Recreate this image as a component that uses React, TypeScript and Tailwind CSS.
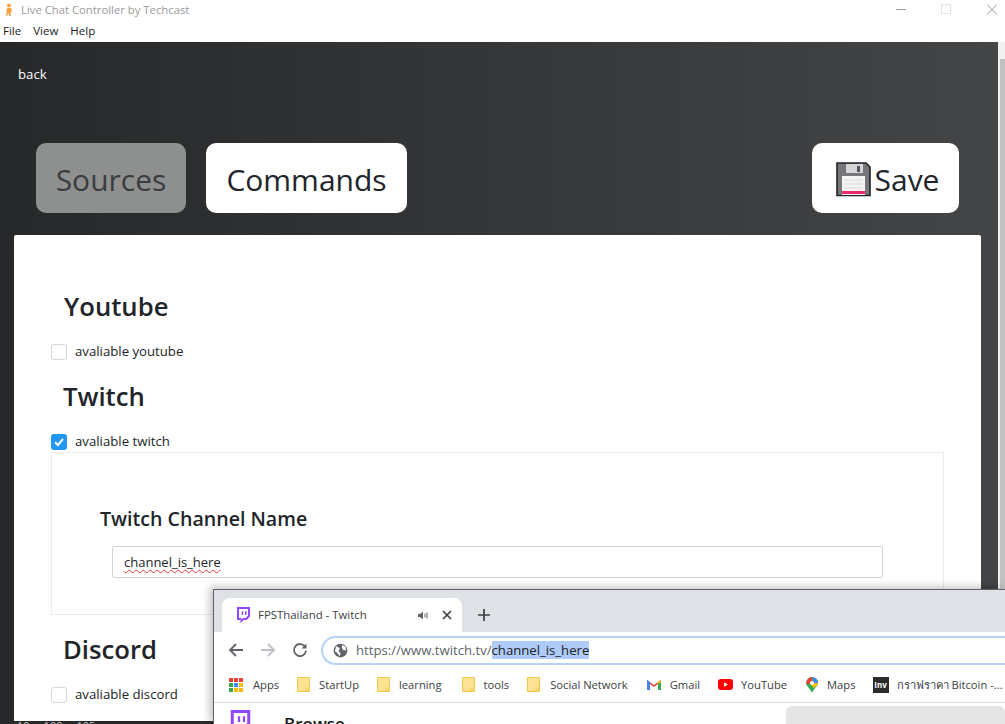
import React from "react";

const font = { fontFamily: '"Open Sans", "Noto Sans", sans-serif' };

function Floppy() {
  return (
    <svg width="35" height="35" viewBox="0 0 35 35" className="shrink-0">
      <path d="M1 1H30L34 5V33.5H1Z" fill="#77777b" stroke="#222226" strokeWidth="1.6" />
      <rect x="10" y="2" width="17" height="9" fill="#d5d5d7" />
      <rect x="21" y="4" width="3" height="6" fill="#55555a" />
      <rect x="6" y="14" width="23" height="19" fill="#f4f4f4" />
      <path d="M8 18H27M8 22H27M8 26H27" stroke="#d8d8d8" strokeWidth="1" />
      <rect x="6" y="29" width="23" height="3" fill="#e8286f" />
    </svg>
  );
}

function Check({ checked, label }: { checked?: boolean; label: string }) {
  return (
    <label className="flex items-center h-[20px] text-[13.2px] text-[#212529]">
      {checked ? (
        <span className="w-4 h-4 rounded-[3px] bg-[#2196f3] flex items-center justify-center">
          <svg width="12" height="12" viewBox="0 0 12 12">
            <path d="M2 6.2L5 9L10 3" fill="none" stroke="#fff" strokeWidth="2" />
          </svg>
        </span>
      ) : (
        <span className="w-4 h-4 rounded-[3px] border border-[#d5d7da] bg-white" />
      )}
      <span className="ml-2">{label}</span>
    </label>
  );
}

function Folder() {
  return (
    <svg width="13" height="15" viewBox="0 0 13 15" className="shrink-0">
      <path d="M.5.5H12.5V14.5H.5Z" fill="#fde293" stroke="#f0c84f" />
      <rect x="9" y="11" width="3" height="3" fill="#fde293" stroke="#f0c84f" strokeWidth=".8" />
    </svg>
  );
}

function Bookmark({ icon, label, gap = "gap-[9px]" }: { icon: React.ReactNode; label: string; gap?: string }) {
  return (
    <span className={`flex items-center ${gap} text-[11.2px] text-[#3c4043] whitespace-nowrap`}>
      {icon}
      {label}
    </span>
  );
}

function Twitch({ size = 15 }: { size?: number }) {
  return (
    <svg width={size} height={size + 1} viewBox="0 0 15 16" className="shrink-0">
      <path d="M2 0H15V9.5L11.5 13H8.5L5.5 16V13H2Z" fill="#9146ff" />
      <path d="M4 2H13V8.7L10.7 11H8L6.3 12.7V11H4Z" fill="#fff" />
      <path d="M7.5 4.2V8M10.8 4.2V8" stroke="#9146ff" strokeWidth="1.5" />
    </svg>
  );
}

function Browser() {
  return (
    <div className="absolute left-[213px] top-[589px] w-[792px] h-[135px] bg-white border-l border-t border-[#5f6368] shadow-[-3px_-2px_8px_rgba(0,0,0,0.25)] overflow-hidden" style={font}>
      <div className="h-[42px] bg-[#dee1e6] flex items-end pl-2 pt-2">
        <div className="w-[240px] h-[34px] bg-white rounded-t-lg flex items-center pl-[13px] pr-[10px]">
          <Twitch />
          <span className="ml-[8px] text-[11.4px] text-[#3c4043]">FPSThailand - Twitch</span>
          <svg width="11" height="11" viewBox="0 0 11 11" className="ml-auto">
            <path d="M0 4H2L5 1.5V9.5L2 7H0Z" fill="#5f6368" />
            <path d="M7 3.5V7.5M9 2.5V8.5" stroke="#5f6368" strokeWidth="1" />
          </svg>
          <svg width="10" height="10" viewBox="0 0 10 10" className="ml-[13px]">
            <path d="M1 1L9 9M9 1L1 9" stroke="#3c4043" strokeWidth="1.7" />
          </svg>
        </div>
        <svg width="12" height="12" viewBox="0 0 12 12" className="ml-[16px] mb-[11px]">
          <path d="M6 0V12M0 6H12" stroke="#3c4043" strokeWidth="1.7" />
        </svg>
      </div>
      <div className="h-[36px] flex items-center pl-[14px] bg-white">
        <svg width="16" height="16" viewBox="0 0 16 16">
          <path d="M15 8H2M8 2L2 8L8 14" fill="none" stroke="#5f6368" strokeWidth="1.8" />
        </svg>
        <svg width="16" height="16" viewBox="0 0 16 16" className="ml-[16px]">
          <path d="M1 8H14M8 2L14 8L8 14" fill="none" stroke="#bdc1c6" strokeWidth="1.8" />
        </svg>
        <svg width="16" height="16" viewBox="0 0 16 16" className="ml-[16px]">
          <path d="M13.2 5A6 6 0 1 0 14 8.5" fill="none" stroke="#5f6368" strokeWidth="1.8" />
          <path d="M14.5 1.5V6.5H9.5Z" fill="#5f6368" />
        </svg>
        <div className="ml-[13px] flex-1 h-[29px] rounded-l-full border-2 border-r-0 border-[#b6d3f5] flex items-center pl-[10px]">
          <svg width="15" height="15" viewBox="0 0 24 24">
            <circle cx="12" cy="12" r="11" fill="#5f6368" />
            <path d="M5 5L11 8L9 13L12 16L11 21L6 15L3 13ZM15 3L20 6L21 12L16 11L14 7Z" fill="#fff" />
          </svg>
          <span className="ml-[8px] text-[13.15px] text-[#5f6368] leading-[22px]">
            https://www.twitch.tv/
            <span className="bg-[#aecbfa] text-[#202124]">channel_is_here</span>
          </span>
        </div>
      </div>
      <div className="h-[35px] border-b border-[#dadce0] flex items-center pl-[15px]">
        <Bookmark
          gap="gap-[10px]"
          label="Apps"
          icon={
            <span className="grid grid-cols-3 gap-[1px] w-[14px]">
              {["#ea4335", "#ea4335", "#ea4335", "#34a853", "#4285f4", "#fbbc04", "#34a853", "#fbbc04", "#fbbc04"].map((c, i) => (
                <span key={i} className="w-[4px] h-[4px]" style={{ background: c }} />
              ))}
            </span>
          }
        />
        <span className="ml-[18px]"><Bookmark icon={<Folder />} label="StartUp" /></span>
        <span className="ml-[18px]"><Bookmark icon={<Folder />} label="learning" /></span>
        <span className="ml-[20px]"><Bookmark icon={<Folder />} label="tools" /></span>
        <span className="ml-[18px]"><Bookmark icon={<Folder />} gap="gap-[10px]" label="Social Network" /></span>
        <span className="ml-[19px]">
          <Bookmark
            label="Gmail"
            icon={
              <svg width="14" height="11" viewBox="0 0 14 11">
                <path d="M0 11V1L7 6L14 1V11H11V5L7 8L3 5V11Z" fill="#ea4335" />
                <path d="M0 11V1L3 3V11Z" fill="#4285f4" />
                <path d="M14 11V1L11 3V11Z" fill="#34a853" />
                <path d="M11 3L14 1V3L11 5Z" fill="#fbbc04" />
              </svg>
            }
          />
        </span>
        <span className="ml-[18px]">
          <Bookmark
            gap="gap-[8px]"
            label="YouTube"
            icon={
              <svg width="15" height="11" viewBox="0 0 15 11">
                <rect width="15" height="11" rx="3" fill="#ff0000" />
                <path d="M6 3.2L10 5.5L6 7.8Z" fill="#fff" />
              </svg>
            }
          />
        </span>
        <span className="ml-[19px]">
          <Bookmark
            gap="gap-[9px]"
            label="Maps"
            icon={
              <svg width="12" height="16" viewBox="0 0 12 16">
                <path d="M6 0A6 6 0 0 1 12 6C12 9 8 11 6 16C4 11 0 9 0 6A6 6 0 0 1 6 0Z" fill="#34a853" />
                <path d="M2 2A6 6 0 0 1 6 0V4L3 7L0.4 7A6 6 0 0 1 2 2Z" fill="#ea4335" />
                <path d="M6 0A6 6 0 0 1 12 6H8Z" fill="#4285f4" />
                <path d="M12 6C12 8 10 9 8 11L5 8L8 6Z" fill="#fbbc04" />
                <circle cx="6" cy="6" r="2" fill="#fff" />
              </svg>
            }
          />
        </span>
        <span className="ml-[17px]">
          <Bookmark
            gap="gap-[8px]"
            label="กราฟราคา Bitcoin -..."
            icon={
              <span className="w-[16px] h-[16px] bg-[#2b2b2b] text-white text-[8px] font-bold flex items-center justify-center leading-none">Inv</span>
            }
          />
        </span>
      </div>
      <div className="relative h-[22px] pl-[13px] pt-[3px] flex">
        <svg width="24" height="24" viewBox="0 0 15 16" className="shrink-0 mt-[4px]">
          <path d="M2 0H15V9.5L11.5 13H8.5L5.5 16V13H2Z" fill="#9146ff" />
          <path d="M4 2H13V8.7L10.7 11H8L6.3 12.7V11H4Z" fill="#fff" />
          <path d="M7.5 4.2V8M10.8 4.2V8" stroke="#9146ff" strokeWidth="1.5" />
        </svg>
        <span className="ml-[33px] mt-[7px] text-[17px] font-semibold text-[#18181b] leading-[22px]">Browse</span>
        <div className="ml-[441px] w-[240px] h-[30px] bg-[#e5e5e5] rounded-md pl-[12px] pt-[8px] text-[13px] text-[#555] leading-[30px]">Search</div>
      </div>
    </div>
  );
}

export default function App() {
  return (
    <div className="relative w-[1005px] h-[724px] overflow-hidden bg-white" style={font}>
      <div className="h-[42px] bg-white">
        <div className="h-[20px] flex items-center pl-[4px] relative">
          <svg width="10" height="14" viewBox="0 0 10 14">
            <circle cx="5" cy="2.5" r="2" fill="#f6a13c" />
            <path d="M3.5 5H7L8 9L6.5 9L7 13H5.5L4.5 10L3 13H2L3 8L2 8Z" fill="#f6a13c" />
          </svg>
          <span className="ml-[7px] text-[11.3px] text-[#9a9a9a]">Live Chat Controller by Techcast</span>
          <div className="absolute right-[4px] top-0 h-[20px]">
            <svg width="105" height="20" viewBox="0 0 105 20">
              <path d="M0 9.5H10" stroke="#a0a0a0" />
              <rect x="45.5" y="4.5" width="9" height="9" fill="none" stroke="#e4e4e4" />
              <path d="M91 4.5L101 14.5M101 4.5L91 14.5" stroke="#a0a0a0" />
            </svg>
          </div>
        </div>
        <div className="h-[22px] flex items-center pl-[3px] gap-[12px] text-[11.5px] text-[#1a1a1a]">
          <span>File</span>
          <span>View</span>
          <span>Help</span>
        </div>
      </div>

      <div className="relative h-[682px] flex">
        <div className="flex-1 min-w-0 bg-gradient-to-r from-[#26282a] to-[#434547] pl-[14px] pr-[17px] overflow-hidden">
          <div className="pl-[4px] pt-[22px] text-[13.2px] leading-[20px] text-white">back</div>
          <div className="flex items-start pl-[22px] pr-[22px] mt-[59px]">
            <div className="w-[150px] h-[70px] pt-[3px] rounded-[10px] bg-[#8e9090] flex items-center justify-center text-[30px] text-[#3a3c3e]">Sources</div>
            <div className="ml-[20px] w-[201px] h-[70px] pt-[3px] rounded-[10px] bg-white flex items-center justify-center text-[30px] text-[#212529]">Commands</div>
            <div className="ml-auto w-[147px] h-[70px] pt-[3px] pl-[4px] rounded-[10px] bg-white flex items-center justify-center text-[30px] text-[#212529]">
              <Floppy />
              <span className="ml-[4px]">Save</span>
            </div>
          </div>
          <div className="mt-[22px] h-[486px] bg-white rounded-t-[2px] pl-[37px] pr-[37px] pt-[50px]">
            <h2 className="pl-[13px] text-[25.7px] leading-[44px] font-semibold text-[#212529]">Youtube</h2>
            <div className="mt-[13px]"><Check label="avaliable youtube" /></div>
            <h2 className="pl-[12px] mt-[13px] text-[25.7px] leading-[44px] font-semibold text-[#212529]">Twitch</h2>
            <div className="mt-[13px]"><Check checked label="avaliable twitch" /></div>
            <div className="h-[163px] border border-[#ececec] pl-[48px] pt-[51px]">
              <div className="text-[19.6px] leading-[30px] font-semibold text-[#212529]">Twitch Channel Name</div>
              <div className="ml-[12px] mt-[12px] w-[771px] h-[32px] border border-[#ced4da] rounded-[2px] pl-[11px] text-[13px] leading-[31px] text-[#212529]">
                <span className="underline decoration-wavy decoration-[#e53935] decoration-1 underline-offset-2">channel_is_here</span>
              </div>
            </div>
            <h2 className="pl-[12px] mt-[13px] text-[25.7px] leading-[44px] font-semibold text-[#212529]">Discord</h2>
            <div className="mt-[13px]"><Check label="avaliable discord" /></div>
          </div>
          <div className="h-[3px] -ml-[14px] bg-[#26282a] overflow-hidden">
            <div className="flex pl-[17px] gap-[14px] text-[11px] leading-[12px] text-[#c8c8c8] -mt-[1px]">
              <span>10</span>
              <span>100</span>
              <span>105</span>
            </div>
          </div>
        </div>
        <div className="w-[7px] bg-[#f1f1f1] flex flex-col">
          <div className="h-[17px] bg-[#f1f1f1]" />
          <div className="flex-1 ml-[2px] bg-[#c1c1c1]" />
        </div>
      </div>

      <Browser />
    </div>
  );
}
